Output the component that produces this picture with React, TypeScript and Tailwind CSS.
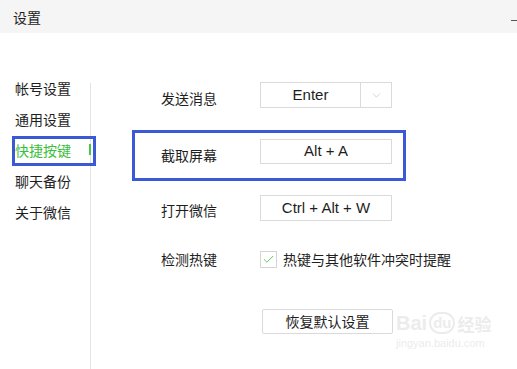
import { Check, ChevronDown } from "lucide-react";

const cjk = "font-['Noto_Sans_CJK_SC','Noto_Sans',sans-serif]";
const latin = "font-['Liberation_Sans','Noto_Sans_CJK_SC',sans-serif]";

export default function App() {
  const menu = ["帐号设置", "通用设置", "快捷按键", "聊天备份", "关于微信"];

  return (
    <div className={`w-[517px] h-[369px] bg-white text-[#1e1e1e] overflow-hidden relative ${cjk}`}>
      {/* Title bar */}
      <div className="h-[33px] bg-[#f5f5f5] flex items-center justify-between">
        <span className="pl-[13px] text-[14px] leading-[20px]">设置</span>
        <span className="w-[6px] h-px bg-[#555] mt-[8px]" />
      </div>

      <div className="flex h-[336px]">
        {/* Sidebar */}
        <nav className="w-[90px] pt-[40px] flex flex-col">
          {menu.map((item, i) => (
            <div
              key={item}
              className={`relative h-[31px] flex items-center pl-[15px] text-[14px] ${
                i === 2 ? "text-[#3cbf3c]" : ""
              }`}
            >
              {item}
              {i === 2 && (
                <>
                  <span className="absolute left-[89px] top-[9px] w-[2px] h-[11px] bg-[#44c944] z-10" />
                  <span className="absolute left-[12px] top-[1px] w-[84px] h-[30px] border-[3px] border-[#3b58d6] z-20" />
                </>
              )}
            </div>
          ))}
        </nav>
        <div className="w-px bg-[#e3e3e3] mt-[50px] self-stretch" />

        {/* Content */}
        <div className="flex flex-col pl-[70px] pt-[49px] text-[14px]">
          <div className="flex h-[26px]">
            <span className="w-[99px] mt-[6px] leading-[20px]">发送消息</span>
            <div className="w-[132px] h-[26px] border border-[#dadada] flex">
              <span className={`flex-1 flex items-center justify-center text-[15px] ${latin}`}>Enter</span>
              <span className="w-[31px] border-l border-[#dadada] flex items-center justify-center">
                <ChevronDown size={13} strokeWidth={1.2} className="text-[#bdbdbd]" />
              </span>
            </div>
          </div>

          <div className="relative flex h-[25px] mt-[31px]">
            <span className="absolute -left-[29px] -top-[9px] w-[274px] h-[51px] border-[3px] border-[#3b58d6]" />
            <span className="w-[99px] mt-[6px] leading-[20px]">截取屏幕</span>
            <div className={`w-[132px] h-[25px] border border-[#dadada] flex items-center justify-center text-[15px] ${latin}`}>
              Alt + A
            </div>
          </div>

          <div className="flex h-[26px] mt-[31px]">
            <span className="w-[99px] mt-[5px] leading-[20px]">打开微信</span>
            <div className={`w-[132px] h-[26px] border border-[#dadada] flex items-center justify-center text-[15px] ${latin}`}>
              Ctrl + Alt + W
            </div>
          </div>

          <div className="flex h-[17px] mt-[30px]">
            <span className="w-[99px] mt-[-2px] leading-[20px]">检测热键</span>
            <span className="w-[17px] h-[17px] border border-[#d4d4d4] flex items-center justify-center">
              <Check size={13} strokeWidth={1.6} className="text-[#4cbf4c]" />
            </span>
            <span className="ml-[6px] mt-[-2px] leading-[20px]">热键与其他软件冲突时提醒</span>
          </div>

          <div className="flex mt-[41px] pl-[101px]">
            <button className="w-[131px] h-[25px] border border-[#dadada] rounded-[2px] flex items-center justify-center text-[14px]">
              恢复默认设置
            </button>
          </div>
        </div>
      </div>

      {/* Watermark */}
      <div className="absolute left-[396px] top-[312px] flex flex-col items-start text-[#ececec] pointer-events-none">
        <div className="flex items-end gap-[2px]">
          <span className={`text-[20px] font-bold leading-[22px] ${latin}`}>Bai</span>
          <span className={`text-[15px] font-bold leading-[18px] border-2 border-[#ececec] rounded-full px-[2px] ${latin}`}>du</span>
          <span className="text-[17px] font-bold leading-[20px]">经验</span>
        </div>
        <span className={`text-[11px] leading-[14px] mt-[2px] ${latin}`}>jingyan.baidu.com</span>
      </div>
    </div>
  );
}
